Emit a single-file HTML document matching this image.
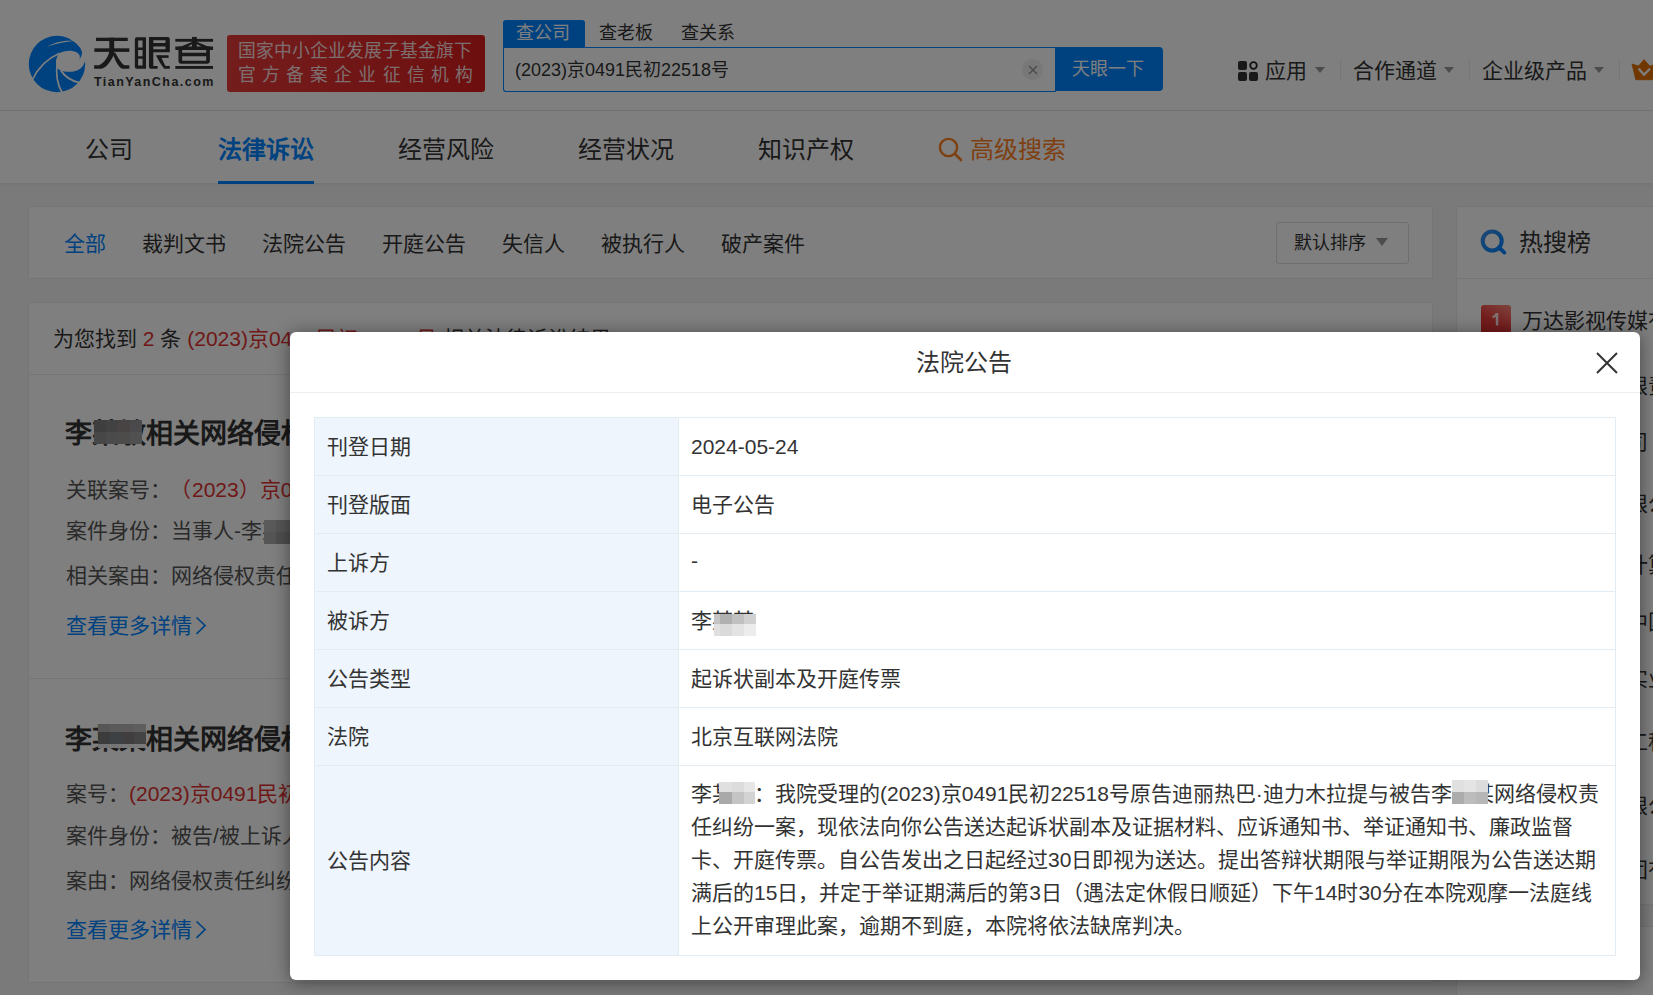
<!DOCTYPE html>
<html lang="zh-CN"><head><meta charset="utf-8">
<style>
*{box-sizing:border-box;margin:0;padding:0}
html,body{width:1653px;height:995px;overflow:hidden}
body{font-family:"Liberation Sans",sans-serif;font-weight:300;background:#f4f4f4;color:#333;position:relative}
.abs{position:absolute;white-space:nowrap}
#header{position:absolute;left:0;top:0;width:1653px;height:111px;background:#fff;border-bottom:1px solid #e4e4e4}
#nav{position:absolute;left:0;top:111px;width:1653px;height:72px;background:#fff;box-shadow:0 2px 3px rgba(0,0,0,.05)}
.card{position:absolute;background:#fff;border:1px solid #ebebeb}
#overlay{position:absolute;left:0;top:0;width:1653px;height:995px;background:rgba(0,0,0,.5)}
#modal{position:absolute;left:290px;top:332px;width:1350px;height:648px;background:#fff;border-radius:6px;box-shadow:0 2px 18px rgba(0,0,0,.45)}
table.t{position:absolute;left:24px;top:85px;width:1302px;border-collapse:collapse}
table.t td{border:1px solid #e3ebf3;font-size:21px;color:#333;vertical-align:middle;padding:0 12px 3px}
table.t td.l{background:#eef5fc;width:364px}
table.t tr{height:58px}
.tri{position:absolute;width:0;height:0;border-left:5px solid transparent;border-right:5px solid transparent;border-top:6px solid #999}
.sep{position:absolute;width:1px;height:21px;background:#ececec;top:59px}
.navi{position:absolute;top:19px;font-size:24px;color:#333}
.flt{position:absolute;top:227px;font-size:21px;color:#333}
.row{position:absolute;font-size:21px;color:#555;white-space:nowrap}
.red{color:#e03030}
.blue{color:#0084ff}
.blur{position:absolute}
.blur i{position:absolute;display:block}
</style></head>
<body>
<div id="header">
  <!-- logo -->
  <svg class="abs" style="left:26px;top:33px" width="62" height="62" viewBox="0 0 62 62">
    <circle cx="31" cy="31" r="28.2" fill="#0084ff"/>
    <path d="M21 13.8 C28 9.5 37 7.2 47 7.9 C37 9 29 10.8 21 13.8Z" fill="#fff"/>
    <path d="M33 20.5 C38 17.5 46 16.8 51 19.5 C54 21.5 54.6 24 53.3 25.8 L62 22 L62 28 L59 28 C57.5 34 53 38.2 45 38.8 C40.5 39 37.5 38.6 35.6 38 C33 37 31 35.5 30.2 32 C29.4 28 30.5 23.5 33 20.5 Z" fill="#fff"/>
    <path d="M46 7.6 C52 10.5 56.2 15 56 20 C55.8 23 54.6 24.8 53.3 25.8 L62 24 L62 0 L40 0 Z" fill="#fff"/>
    <path d="M6.5 46.5 Q15 28.5 33.5 20.3" fill="none" stroke="#fff" stroke-width="1.7"/>
    <path d="M31.2 30 C29.6 41 31 51 36.3 60" fill="none" stroke="#fff" stroke-width="1.7"/>
    <path d="M35 37.8 C38.5 43 44 47.5 53 49.6" fill="none" stroke="#fff" stroke-width="2"/>
  </svg>
  <svg class="abs" style="left:90px;top:33px" width="130" height="40" viewBox="0 0 1653 509" fill="#333">
    <rect x="75" y="60" width="405" height="42"/>
    <rect x="55" y="195" width="445" height="45"/>
    <rect x="245" y="60" width="62" height="200"/>
    <path d="M245 240 L307 240 L307 275 C262 360 205 455 140 455 L52 455 L52 410 L112 410 C165 395 228 315 245 240 Z"/>
    <path d="M292 268 L320 248 C360 322 415 405 440 410 L500 410 L500 455 L410 455 C362 440 318 350 292 268 Z"/>
    <path fill-rule="evenodd" d="M595 55 L712 55 L712 455 L595 455 Q570 455 570 430 L570 80 Q570 55 595 55 Z M612 95 L668 95 L668 185 L612 185 Z M612 217 L668 217 L668 297 L612 297 Z M612 327 L668 327 L668 412 L612 412 Z"/>
    <path fill-rule="evenodd" d="M750 50 L990 50 Q1015 50 1015 75 L1015 245 L805 245 L805 420 L860 420 L860 455 L775 455 Q750 455 750 430 Z M805 92 L960 92 L960 128 L805 128 Z M805 172 L960 172 L960 208 L805 208 Z"/>
    <rect x="880" y="283" width="120" height="34"/>
    <path d="M838 283 L895 283 C920 340 945 395 962 420 L1015 420 L1015 455 L945 455 C905 405 865 340 838 283 Z"/>
    <rect x="1085" y="75" width="480" height="36"/>
    <rect x="1297" y="50" width="62" height="135"/>
    <path d="M1300 111 L1345 111 C1290 150 1220 180 1190 215 L1085 215 L1085 172 L1160 172 C1210 150 1260 130 1300 111 Z"/>
    <path d="M1360 111 L1315 111 C1370 150 1440 180 1470 215 L1565 215 L1565 172 L1500 172 C1450 150 1400 130 1360 111 Z"/>
    <path fill-rule="evenodd" d="M1125 172 L1525 172 L1525 360 Q1525 390 1495 390 L1155 390 Q1125 390 1125 360 Z M1172 215 L1478 215 L1478 250 L1172 250 Z M1172 295 L1478 295 L1478 352 L1172 352 Z"/>
    <rect x="1085" y="420" width="480" height="36"/>
  </svg>
  <div class="abs" style="left:94px;top:74.5px;font-size:12.5px;font-weight:bold;color:#333;letter-spacing:1.45px">TianYanCha.com</div>
  <div class="abs" style="left:227px;top:35px;width:258px;height:57px;background:linear-gradient(90deg,#e83a3a,#dc1e1e);border-radius:3px"></div>
  <div class="abs" style="left:238px;top:38.5px;font-size:17.8px;line-height:24px;color:rgba(255,255,255,.85)">国家中小企业发展子基金旗下</div>
  <div class="abs" style="left:238px;top:63px;font-size:17.8px;line-height:24px;color:rgba(255,255,255,.85);letter-spacing:6.1px">官方备案企业征信机构</div>
  <!-- search tabs -->
  <div class="abs" style="left:503px;top:20px;width:82px;height:28px;background:#0084ff;border-radius:3px 3px 0 0"></div>
  <div class="abs" style="left:516px;top:20px;font-size:18px;line-height:26px;color:#fff">查公司</div>
  <div class="abs" style="left:599px;top:20px;font-size:18px;line-height:26px;color:#333">查老板</div>
  <div class="abs" style="left:681px;top:20px;font-size:18px;line-height:26px;color:#333">查关系</div>
  <div class="abs" style="left:503px;top:47px;width:553px;height:45px;border:1.5px solid #0084ff;border-right:none;border-radius:0 0 0 3px;background:#fff"></div>
  <div class="abs" style="left:515px;top:57px;font-size:18px;line-height:26px;color:#333">(2023)京0491民初22518号</div>
  <div class="abs" style="left:1022px;top:59px;width:21px;height:21px;border-radius:50%;background:#f0f0f0"></div>
  <svg class="abs" style="left:1028px;top:65px" width="10" height="10" viewBox="0 0 10 10"><path d="M1 1L9 9M9 1L1 9" stroke="#999" stroke-width="1.5"/></svg>
  <div class="abs" style="left:1055px;top:47px;width:108px;height:44px;background:#0084ff;border-radius:0 4px 4px 0"></div>
  <div class="abs" style="left:1072px;top:56px;font-size:18px;line-height:26px;color:#fff">天眼一下</div>
  <!-- right nav -->
  <svg class="abs" style="left:1238px;top:61px" width="20" height="20" viewBox="0 0 20 20">
    <rect x="0" y="0" width="9" height="9" rx="2" fill="#333"/>
    <circle cx="15.5" cy="4.5" r="3.3" fill="none" stroke="#222" stroke-width="1.8"/>
    <rect x="0" y="11" width="9" height="9" rx="2" fill="#333"/>
    <rect x="11" y="11" width="9" height="9" rx="2" fill="#333"/>
  </svg>
  <div class="abs" style="left:1265px;top:56px;font-size:21px;line-height:30px;color:#333">应用</div>
  <div class="tri" style="left:1315px;top:67px"></div>
  <div class="sep" style="left:1340px"></div>
  <div class="abs" style="left:1353px;top:56px;font-size:21px;line-height:30px;color:#333">合作通道</div>
  <div class="tri" style="left:1444px;top:67px"></div>
  <div class="sep" style="left:1469px"></div>
  <div class="abs" style="left:1482px;top:56px;font-size:21px;line-height:30px;color:#333">企业级产品</div>
  <div class="tri" style="left:1594px;top:67px"></div>
  <div class="sep" style="left:1619px"></div>
  <svg class="abs" style="left:1631px;top:59px" width="26" height="22" viewBox="0 0 26 22">
    <path d="M1 5 L7.6 7 L13 0.6 L18.7 7 L25 5.5 L21.5 20.7 L4.8 20.7 Z" fill="#e07000" stroke="#e07000" stroke-width="0.8" stroke-linejoin="round"/>
    <path d="M8.2 10.3 L13 15.8 L18.4 10.3" fill="none" stroke="#fff" stroke-width="2.3" stroke-linecap="round" stroke-linejoin="round"/>
  </svg>
</div>
<div id="nav">
  <div class="navi" style="left:85px">公司</div>
  <div class="navi" style="left:218px;font-weight:bold;color:#0084ff">法律诉讼</div>
  <div class="abs" style="left:218px;top:70px;width:96px;height:3px;background:#0084ff"></div>
  <div class="navi" style="left:398px">经营风险</div>
  <div class="navi" style="left:578px">经营状况</div>
  <div class="navi" style="left:758px">知识产权</div>
  <svg class="abs" style="left:938px;top:26px" width="25" height="25" viewBox="0 0 25 25"><circle cx="10.5" cy="10.5" r="8.6" fill="none" stroke="#ff7f1f" stroke-width="2.4"/><path d="M17 17L23 23" stroke="#ff7f1f" stroke-width="2.6" stroke-linecap="round"/></svg>
  <div class="navi" style="left:970px;color:#ff7f1f">高级搜索</div>
</div>
<!-- filter card -->
<div class="card" style="left:28px;top:206px;width:1405px;height:73px"></div>
<div class="flt blue" style="left:64px">全部</div>
<div class="flt" style="left:142px">裁判文书</div>
<div class="flt" style="left:262px">法院公告</div>
<div class="flt" style="left:382px">开庭公告</div>
<div class="flt" style="left:502px">失信人</div>
<div class="flt" style="left:601px">被执行人</div>
<div class="flt" style="left:721px">破产案件</div>
<div class="abs" style="left:1276px;top:222px;width:133px;height:42px;border:1px solid #ddd;border-radius:3px"></div>
<div class="abs" style="left:1294px;top:230px;font-size:18px;line-height:26px;color:#333">默认排序</div>
<div class="tri" style="left:1376px;top:238px;border-left-width:6px;border-right-width:6px;border-top-width:8px"></div>
<!-- right rail -->
<div class="card" style="left:1456px;top:206px;width:300px;height:699px"></div>
<div class="card" style="left:1456px;top:926px;width:300px;height:200px"></div>
<div class="abs" style="left:1457px;top:278px;width:300px;height:1px;background:#ebebeb"></div>
<svg class="abs" style="left:1480px;top:229px" width="28" height="28" viewBox="0 0 28 28"><defs><linearGradient id="sg" x1="0" y1="0" x2="1" y2="1"><stop offset="0" stop-color="#3a8ee8"/><stop offset="1" stop-color="#0084ff"/></linearGradient></defs><circle cx="12.2" cy="12" r="9.5" fill="none" stroke="url(#sg)" stroke-width="4"/><path d="M19 18.5L24.4 23.6" stroke="#0084ff" stroke-width="3.8" stroke-linecap="round"/></svg>
<div class="abs" style="left:1519px;top:226px;font-size:24px;line-height:34px;color:#333">热搜榜</div>
<div class="abs" style="left:1481px;top:305px;width:30px;height:32px;background:linear-gradient(210deg,#ff8a7a,#e83a3a 55%,#e02a2a);border-radius:3px"></div><svg class="abs" style="left:1491.5px;top:312.5px" width="7" height="13" viewBox="0 0 7 13"><path d="M3.6 0 L6.3 0 L6.3 12.4 L3.8 12.4 L3.8 3.5 C3 4.2 1.8 4.8 0.5 5.2 L0.5 3 C2 2.5 3.1 1.4 3.6 0 Z" fill="#fff" fill-opacity=".85"/></svg>
<div class="abs" style="left:1522px;top:306px;font-size:21px;line-height:30px;color:#333">万达影视传媒有限公司</div>
<div class="abs" style="left:1522px;top:371px;font-size:21px;line-height:30px;color:#333">华为技术有限责任公司</div>
<div class="abs" style="left:1522px;top:427px;font-size:21px;line-height:30px;color:#333">腾讯科技公司</div>
<div class="abs" style="left:1522px;top:489px;font-size:21px;line-height:30px;color:#333">小米科技有限公司</div>
<div class="abs" style="left:1522px;top:550px;font-size:21px;line-height:30px;color:#333">阿里巴巴云计算有限公司</div>
<div class="abs" style="left:1522px;top:607px;font-size:21px;line-height:30px;color:#333">中信证券股中国</div>
<div class="abs" style="left:1522px;top:664px;font-size:21px;line-height:30px;color:#333">碧桂园控股实业</div>
<div class="abs" style="left:1522px;top:727px;font-size:21px;line-height:30px;color:#333">中国建筑第工程局</div>
<div class="abs" style="left:1522px;top:791px;font-size:21px;line-height:30px;color:#333">美团点评有限公司</div>
<div class="abs" style="left:1522px;top:855px;font-size:21px;line-height:30px;color:#333">恒大地产集团有限公司</div>

<!-- results card -->
<div class="card" style="left:28px;top:302px;width:1405px;height:681px"></div>
<div class="abs" style="left:29px;top:374px;width:1403px;height:1px;background:#ebebeb"></div>
<div class="row" style="left:53px;top:322px;color:#333">为您找到 <span class="red">2</span> 条 <span class="red">(2023)京0491民初22518号</span> 相关法律诉讼结果</div>
<div class="abs" style="left:65px;top:412px;font-size:27px;font-weight:bold;color:#333">李某敏相关网络侵权责任纠纷</div>
<div class="row" style="left:66px;top:473px">关联案号：<span class="red" style="margin-left:10px">（2023）京0491民初22518号</span></div>
<div class="row" style="left:66px;top:514px">案件身份：当事人-李某敏</div>
<div class="row" style="left:66px;top:559px">相关案由：网络侵权责任纠纷</div>
<div class="row blue" style="left:66px;top:609px">查看更多详情</div><svg class="abs" style="left:195px;top:616px" width="12" height="20" viewBox="0 0 12 20"><path d="M1.5 1.5L10 9.5L1.5 17.8" fill="none" stroke="#0084ff" stroke-width="1.7"/></svg>
<div class="abs" style="left:29px;top:678px;width:1403px;height:1px;background:#ebebeb"></div>
<div class="abs" style="left:65px;top:717.5px;font-size:27px;font-weight:bold;color:#333">李某某相关网络侵权责任纠纷</div>
<div class="row" style="left:66px;top:777px">案号：<span class="red">(2023)京0491民初22518号</span></div>
<div class="row" style="left:66px;top:819px">案件身份：被告/被上诉人</div>
<div class="row" style="left:66px;top:864px">案由：网络侵权责任纠纷</div>
<div class="row blue" style="left:66px;top:913px">查看更多详情</div><svg class="abs" style="left:195px;top:920px" width="12" height="20" viewBox="0 0 12 20"><path d="M1.5 1.5L10 9.5L1.5 17.8" fill="none" stroke="#0084ff" stroke-width="1.7"/></svg>

<div class="blur"><i style="left:94px;top:420px;width:12px;height:12px;background:#7c7c7c"></i><i style="left:94px;top:432px;width:12px;height:12px;background:#8e8e8e"></i><i style="left:106px;top:420px;width:12px;height:12px;background:#848484"></i><i style="left:106px;top:432px;width:12px;height:12px;background:#969696"></i><i style="left:118px;top:420px;width:12px;height:12px;background:#8e8886"></i><i style="left:118px;top:432px;width:12px;height:12px;background:#9c9896"></i><i style="left:130px;top:420px;width:12px;height:12px;background:#949498"></i><i style="left:130px;top:432px;width:12px;height:12px;background:#a0a0a0"></i><i style="left:98px;top:724px;width:12px;height:8px;background:#acacac"></i><i style="left:98px;top:732px;width:12px;height:12px;background:#787878"></i><i style="left:98px;top:744px;width:12px;height:4px;background:#e8e8e8"></i><i style="left:110px;top:724px;width:12px;height:8px;background:#b4b4b4"></i><i style="left:110px;top:732px;width:12px;height:12px;background:#7c8288"></i><i style="left:110px;top:744px;width:12px;height:4px;background:#ececec"></i><i style="left:122px;top:724px;width:12px;height:8px;background:#b8b4b4"></i><i style="left:122px;top:732px;width:12px;height:12px;background:#807c7c"></i><i style="left:122px;top:744px;width:12px;height:4px;background:#f0f0f0"></i><i style="left:134px;top:724px;width:12px;height:8px;background:#bcbcbc"></i><i style="left:134px;top:732px;width:12px;height:12px;background:#888888"></i><i style="left:134px;top:744px;width:12px;height:4px;background:#f4f4f4"></i><i style="left:264px;top:520px;width:12px;height:12px;background:#b4b4b4"></i><i style="left:264px;top:532px;width:12px;height:12px;background:#aaaaaa"></i><i style="left:276px;top:520px;width:14px;height:12px;background:#aaaaaa"></i><i style="left:276px;top:532px;width:14px;height:12px;background:#9c9c9c"></i></div>
<div id="overlay"></div>
<div id="modal">
  <div class="abs" style="left:0;top:0;width:1350px;height:61px;border-bottom:1px solid #eceef0"></div>
  <div class="abs" style="left:626px;top:11px;font-size:24px;color:#333">法院公告</div>
  <svg class="abs" style="left:1305px;top:19px" width="24" height="24" viewBox="0 0 24 24"><path d="M2 2L22 22M22 2L2 22" stroke="#333" stroke-width="2"/></svg>
  <table class="t">
    <tr><td class="l">刊登日期</td><td><span style="position:relative;top:1.5px">2024-05-24</span></td></tr>
    <tr><td class="l">刊登版面</td><td>电子公告</td></tr>
    <tr><td class="l">上诉方</td><td>-</td></tr>
    <tr><td class="l">被诉方</td><td>李某某</td></tr>
    <tr><td class="l">公告类型</td><td>起诉状副本及开庭传票</td></tr>
    <tr><td class="l">法院</td><td>北京互联网法院</td></tr>
    <tr style="height:190px"><td class="l">公告内容</td><td style="line-height:33px">李某某：我院受理的(2023)京0491民初22518号原告迪丽热巴·迪力木拉提与被告李某某网络侵权责<br>任纠纷一案，现依法向你公告送达起诉状副本及证据材料、应诉通知书、举证通知书、廉政监督<br>卡、开庭传票。自公告发出之日起经过30日即视为送达。提出答辩状期限与举证期限为公告送达期<br>满后的15日，并定于举证期满后的第3日（遇法定休假日顺延）下午14时30分在本院观摩一法庭线<br>上公开审理此案，逾期不到庭，本院将依法缺席判决。</td></tr>
  </table>
<div class="blur"><i style="left:424px;top:282px;width:6px;height:10px;background:#c4c4c4"></i><i style="left:424px;top:292px;width:6px;height:12px;background:#e0e0e0"></i><i style="left:430px;top:282px;width:12px;height:10px;background:#b0b0b0"></i><i style="left:430px;top:292px;width:12px;height:12px;background:#dadada"></i><i style="left:442px;top:282px;width:12px;height:10px;background:#c0c0c0"></i><i style="left:442px;top:292px;width:12px;height:12px;background:#e3e3e3"></i><i style="left:454px;top:282px;width:12px;height:10px;background:#d0d0d0"></i><i style="left:454px;top:292px;width:12px;height:12px;background:#ececec"></i><i style="left:429px;top:450px;width:13px;height:10px;background:#e0e0e0"></i><i style="left:429px;top:460px;width:13px;height:12px;background:#a9a9a9"></i><i style="left:442px;top:450px;width:12px;height:10px;background:#dcdcdc"></i><i style="left:442px;top:460px;width:12px;height:12px;background:#c4c4c4"></i><i style="left:454px;top:450px;width:11px;height:10px;background:#e6e6e6"></i><i style="left:454px;top:460px;width:11px;height:12px;background:#d3d3d3"></i><i style="left:1162px;top:448px;width:12px;height:12px;background:#e0e0e0"></i><i style="left:1162px;top:460px;width:12px;height:12px;background:#acacac"></i><i style="left:1174px;top:448px;width:12px;height:12px;background:#e4e4e4"></i><i style="left:1174px;top:460px;width:12px;height:12px;background:#bcbcbc"></i><i style="left:1186px;top:448px;width:12px;height:12px;background:#dcdcdc"></i><i style="left:1186px;top:460px;width:12px;height:12px;background:#b6b6b6"></i></div>
</div>
</body></html>
